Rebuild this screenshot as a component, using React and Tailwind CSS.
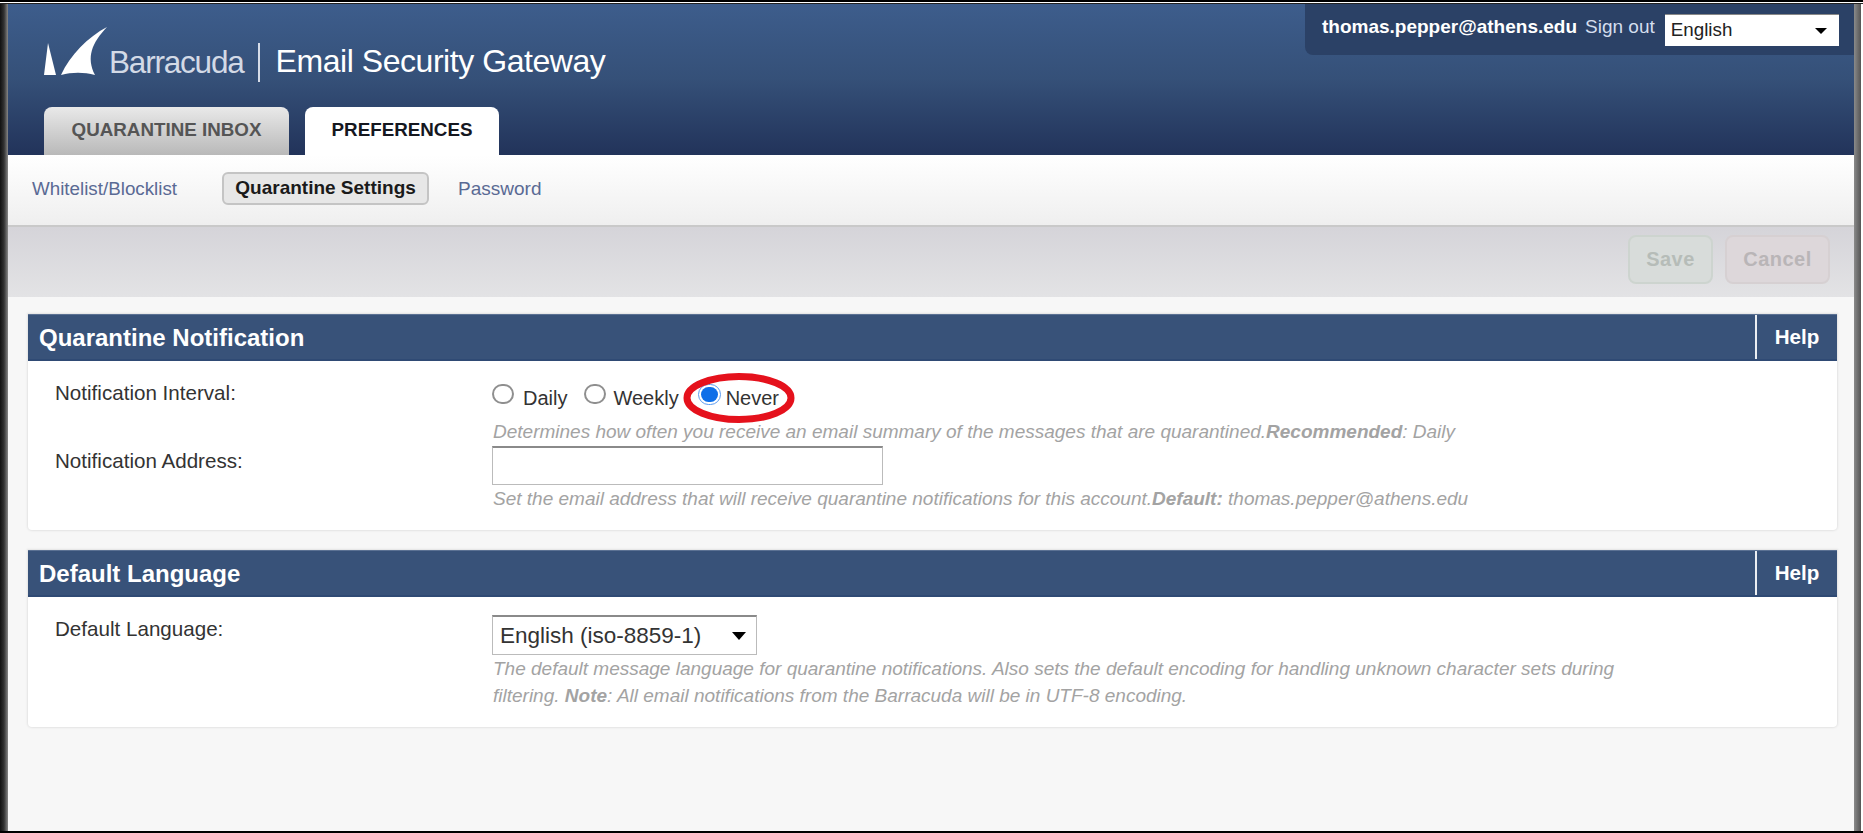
const sans = "font-['Liberation_Sans',Arial,sans-serif]";

function Shark() {
  return (
    <svg width="64" height="48" viewBox="0 0 64 48" className="block shrink-0">
      <path d="M0 48 L4 16 L12 48 Z" fill="#fff" />
      <path d="M17 48 C26 28 44 10 63 0 C48 16 42 30 51 48 C40 45 28 45 17 48 Z" fill="#fff" />
    </svg>
  );
}

function Caret({ className }) {
  return <span className={`block w-0 h-0 border-x-[6px] border-x-transparent border-t-[6px] border-t-black ${className || ""}`} />;
}

function Radio({ checked, className }) {
  return checked ? (
    <span className={`block shrink-0 w-[23px] h-[21px] rounded-full border border-[#5b9bf0] bg-white p-[2px] ${className || ""}`}>
      <span className="block w-full h-full rounded-full bg-[#0f6fe8]" />
    </span>
  ) : (
    <span className={`block shrink-0 w-[22px] h-[20px] rounded-full border-2 border-[#8f8f8f] bg-white ${className || ""}`} />
  );
}

function Section({ title, bodyClass, children }) {
  return (
    <section className="rounded-b-[4px] bg-white shadow-[0_0_2px_1px_#e3e3e3]">
      <div className="h-[47px] bg-[#385279] border-t border-[#5b7193] border-b-2 border-b-[#2f4a74] flex items-center justify-between">
        <h2 className="pl-[11px] pt-[2px] text-[24px] font-bold text-white">{title}</h2>
        <div className="w-[82px] h-full border-l-2 border-white/90 flex items-center justify-center text-[20.6px] font-bold text-white">Help</div>
      </div>
      <div className={bodyClass}>{children}</div>
    </section>
  );
}

function Hint({ children, className }) {
  return <p className={`pl-[1px] text-[19px] italic text-[#a3a3a3] ${className || ""}`}>{children}</p>;
}

export default function App() {
  return (
    <div className={`w-[1863px] h-[833px] overflow-hidden bg-black ${sans}`}>
      <div className="h-[2px] bg-black" />
      <div className="h-[1px] bg-white" />
      <div className="h-[1px] bg-[#222]" />
      <div className="flex h-[827px]">
        <div className="w-[8px] bg-gradient-to-r from-[#111] via-[#333] to-[#888]" />
        <main className="w-[1846px] bg-[#f7f7f7] flex flex-col">
          <header className="h-[151px] bg-gradient-to-b from-[#3d5d8c] via-[#355078] to-[#22335a] flex flex-col justify-between relative">
            <div className="absolute right-0 top-0 w-[549px] h-[51px] rounded-bl-[8px] bg-[#2b4166] flex items-start pl-[17px] pt-[10px]">
              <span className="mt-[1px] text-[19px] font-bold text-white leading-[24px]">thomas.pepper@athens.edu</span>
              <span className="ml-[8px] mt-[1px] text-[19px] text-[#d4deee] leading-[24px]">Sign out</span>
              <div className="ml-[10px] w-[174px] h-[32px] bg-white border-t border-[#888] flex items-center justify-between pl-[6px] pr-[12px]">
                <span className="text-[18.8px] text-[#222]">English</span>
                <Caret />
              </div>
            </div>
            <div className="flex items-start pl-[36px] pt-[23px]">
              <Shark />
              <span className="ml-[1px] mt-[17px] text-[31.5px] leading-[36px] tracking-[-1.2px] text-[#d3dae6]">Barracuda</span>
              <span className="ml-[14px] mt-[16px] w-[2px] h-[39px] bg-[#d6dce8]" />
              <span className="ml-[16px] mt-[16px] text-[32px] leading-[37px] tracking-[-0.45px] text-white">Email Security Gateway</span>
            </div>
            <nav className="flex pl-[36px] gap-[16px]">
              <span className="w-[245px] h-[48px] pb-[2px] rounded-t-[8px] bg-gradient-to-b from-[#e9e9e9] to-[#b9b9b9] flex items-center justify-center text-[18.8px] font-bold text-[#555]">QUARANTINE INBOX</span>
              <span className="w-[194px] h-[48px] pb-[2px] rounded-t-[8px] bg-white flex items-center justify-center text-[18.8px] font-bold text-[#15171f]">PREFERENCES</span>
            </nav>
          </header>

          <div className="h-[72px] bg-gradient-to-b from-white to-[#efefef] border-b-2 border-[#c9c9c9] flex items-start pt-[17px] pl-[24px]">
            <span className="text-[18.8px] leading-[33px] text-[#5a6a94]">Whitelist/Blocklist</span>
            <span className="ml-[45px] h-[33px] w-[207px] rounded-[6px] border-2 border-[#c4c4c4] bg-[#e7e7e7] flex items-center justify-center text-[19px] font-bold text-[#1a1a1a]">Quarantine Settings</span>
            <span className="ml-[29px] text-[19px] leading-[33px] text-[#5a6a94]">Password</span>
          </div>

          <div className="h-[70px] bg-gradient-to-b from-[#d5d4d9] to-[#e3e3e5] flex items-start justify-end pt-[8px] pr-[24px] gap-[12px]">
            <span className="w-[85px] h-[49px] pb-[2px] rounded-[8px] border-2 border-[#cdd4cf] bg-[#d8dcda] flex items-center justify-center text-[20px] font-bold tracking-[0.5px] text-[#b6bcb8]">Save</span>
            <span className="w-[105px] h-[49px] pb-[2px] rounded-[8px] border-2 border-[#d6d0d2] bg-[#ddd7da] flex items-center justify-center text-[20px] font-bold tracking-[0.5px] text-[#b9b5b7]">Cancel</span>
          </div>

          <div className="flex flex-col gap-[20px] pl-[20px] pr-[17px] pt-[17px]">
            <Section title="Quarantine Notification" bodyClass="h-[169px] pl-[27px] pt-[20px] flex text-[#333]">
              <div className="w-[437px] text-[20.6px]">
                <div className="leading-[24px]">Notification Interval:</div>
                <div className="mt-[44px] leading-[24px]">Notification Address:</div>
              </div>
              <div className="relative">
                <div className="flex items-center text-[20px] h-[24px] mt-[5px]">
                  <Radio className="-mt-[8px]" />
                  <span className="ml-[9px]">Daily</span>
                  <Radio className="-mt-[8px] ml-[17px]" />
                  <span className="ml-[7px]">Weekly</span>
                  <Radio checked className="-mt-[8px] ml-[19px]" />
                  <span className="ml-[5px]">Never</span>
                </div>
                <svg className="absolute left-[191px] -top-[8px]" width="112" height="50" viewBox="0 0 112 50">
                  <ellipse cx="56" cy="25" rx="52" ry="21.5" fill="none" stroke="#e5111c" strokeWidth="7" />
                </svg>
                <Hint className="mt-[10px] leading-[24px]">Determines how often you receive an email summary of the messages that are quarantined.<b>Recommended</b>: Daily</Hint>
                <div className="w-[391px] h-[39px] bg-white border border-[#bbb] border-t-2 border-t-[#8a8a8a] mt-[2px]" />
                <Hint className="mt-[2px] leading-[24px]">Set the email address that will receive quarantine notifications for this account.<b>Default:</b> thomas.pepper@athens.edu</Hint>
              </div>
            </Section>

            <Section title="Default Language" bodyClass="h-[130px] pl-[27px] pt-[18px] flex text-[#333]">
              <div className="w-[437px] mt-[2px] text-[20.6px] leading-[24px]">Default Language:</div>
              <div>
                <div className="w-[265px] h-[40px] bg-white border border-[#bbb] border-t-2 border-t-[#8a8a8a] flex items-center justify-between pl-[7px] pr-[10px] text-[22.5px] leading-[28px]">
                  <span>English (iso-8859-1)</span>
                  <Caret className="border-x-[7px] border-t-[8px]" />
                </div>
                <Hint className="w-[1150px] leading-[27px]">The default message language for quarantine notifications. Also sets the default encoding for handling unknown character sets during filtering. <b>Note</b>: All email notifications from the Barracuda will be in UTF-8 encoding.</Hint>
              </div>
            </Section>
          </div>
        </main>
        <div className="w-[7px] bg-gradient-to-r from-[#8a8a8a] to-[#555]" />
        <div className="w-[2px] bg-white" />
      </div>
    </div>
  );
}
